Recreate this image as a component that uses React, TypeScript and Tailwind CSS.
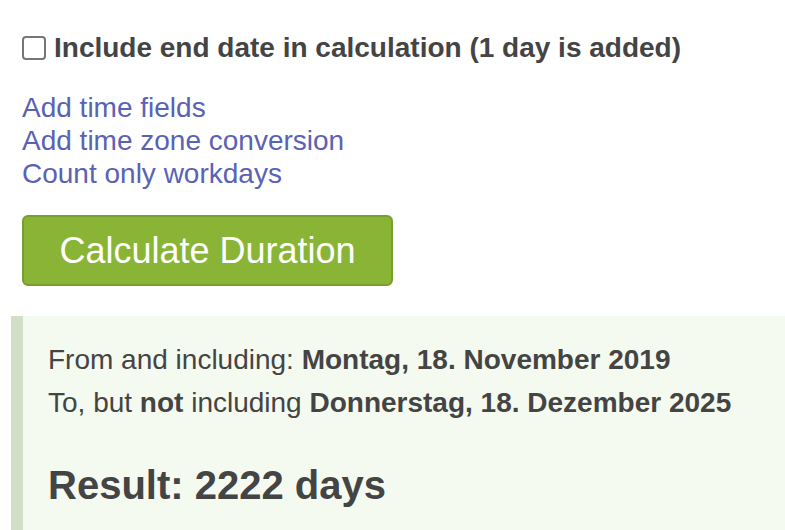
import { useState } from "react";

const App = () => {
  const [includeEnd, setIncludeEnd] = useState(false);

  return (
    <div
      className="w-[785px] h-[530px] overflow-hidden bg-white text-[#444444]"
      style={{ fontFamily: '"Liberation Sans", Arial, sans-serif' }}
    >
      <div className="pl-[22px] pt-[32px]">
        <label className="flex items-center gap-[8px] text-[28px] font-bold leading-[32px]">
          <input
            type="checkbox"
            checked={includeEnd}
            onChange={(e) => setIncludeEnd(e.target.checked)}
            className="appearance-none shrink-0 w-[24px] h-[24px] border-2 border-[#767676] rounded-[4px] bg-white"
          />
          Include end date in calculation (1 day is added)
        </label>

        <div className="flex flex-col mt-[27px] text-[28px] leading-[33px] text-[#5a62b4]">
          <a href="#">Add time fields</a>
          <a href="#">Add time zone conversion</a>
          <a href="#">Count only workdays</a>
        </div>

        <button className="mt-[25px] w-[371px] h-[71px] rounded-[6px] border-2 border-[#769f2c] bg-[#8ab435] text-white text-[36px]">
          Calculate Duration
        </button>
      </div>

      <div className="ml-[11px] mt-[30px] border-l-[12px] border-[#d0dfc5] bg-[#f5faf0] pl-[25px] pt-[22px] pb-[40px]">
        <p className="text-[28px] leading-[43px]">
          From and including: <b>Montag, 18. November 2019</b>
        </p>
        <p className="text-[28px] leading-[43px]">
          To, but <b>not</b> including <b>Donnerstag, 18. Dezember 2025</b>
        </p>
        <p className="mt-[37px] text-[40px] font-bold leading-[48px]">Result: 2222 days</p>
      </div>
    </div>
  );
};

export default App;
